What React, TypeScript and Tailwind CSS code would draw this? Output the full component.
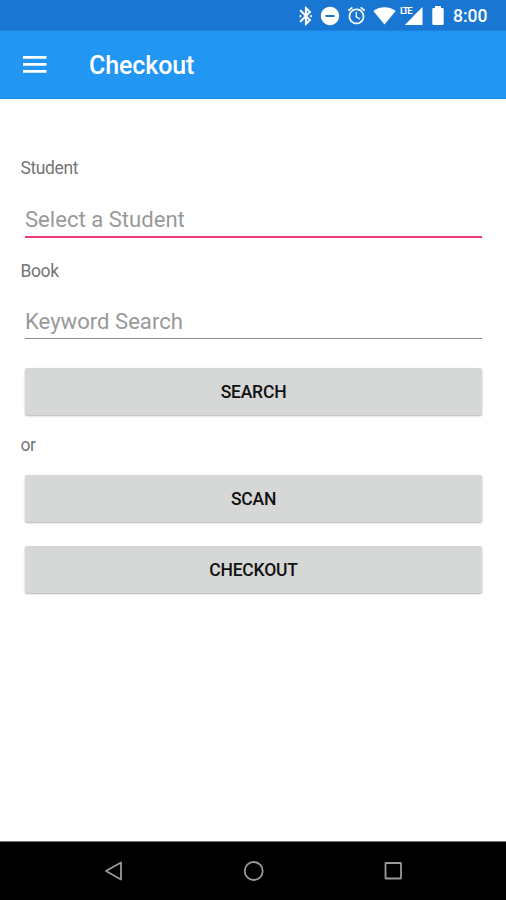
import type { ReactNode } from 'react';

function StatusBar() {
  return (
    <div className="flex h-[30px] shrink-0 items-center bg-[#1976d2] pl-[295px] pt-px text-white">
      <svg className="h-[22px] w-[22px]" viewBox="0 0 24 24" fill="currentColor">
        <path
          stroke="currentColor"
          strokeWidth={0.3}
          d="M17.71 7.71L12 2h-1v7.59L6.41 5 5 6.41 10.59 12 5 17.59 6.41 19 11 14.41V22h1l5.71-5.71-4.3-4.29 4.3-4.29zM13 5.83l1.88 1.88L13 9.59V5.83zm1.88 10.46L13 18.17v-3.76l1.88 1.88z"
        />
        <path d="M4.5 12L6 10.5 7.5 12 6 13.5zM16 12l1.5-1.5L19 12l-1.5 1.5z" />
      </svg>
      <svg className="ml-[2px] h-[22px] w-[22px]" viewBox="0 0 24 24" fill="currentColor">
        <path d="M12 2C6.48 2 2 6.48 2 12s4.48 10 10 10 10-4.48 10-10S17.52 2 12 2zm5 11H7v-2h10v2z" />
      </svg>
      <svg className="ml-[5px] h-[21px] w-[21px]" viewBox="0 0 24 24" fill="currentColor">
        <path d="M22 5.72l-4.6-3.86-1.29 1.53 4.6 3.86L22 5.72zM7.88 3.39L6.6 1.86 2 5.71l1.29 1.53 4.59-3.85zM12.5 8H11v6l4.75 2.85.75-1.23-4-2.37V8zM12 4c-4.97 0-9 4.03-9 9s4.02 9 9 9c4.97 0 9-4.03 9-9s-4.03-9-9-9zm0 16c-3.87 0-7-3.13-7-7s3.13-7 7-7 7 3.13 7 7-3.13 7-7 7z" />
      </svg>
      <svg className="ml-[6px] h-[18px] w-[23px]" viewBox="0 0 23 18" fill="currentColor">
        <path d="M11.5 17.5L.3 4C3 1.6 7 .2 11.5.2S20 1.6 22.7 4z" />
      </svg>
      <div className="relative ml-[4px] h-[18px] w-[23px]">
        <svg className="h-[18px] w-[23px]" viewBox="0 0 23 18" fill="currentColor">
          <path d="M22.5 0v18H4.8l8.4-8.6V9.3z" />
        </svg>
        <span className="absolute left-0 top-0 text-[9.5px] font-bold leading-[8px] tracking-[-1.4px]">LTE</span>
      </div>
      <svg className="ml-[9px] h-[19px] w-[12px]" viewBox="0 0 12 19" fill="currentColor">
        <path d="M3 0h6v2h1.5A1.2 1.2 0 0 1 11.7 3.2v14.5A1.2 1.2 0 0 1 10.5 19h-9A1.2 1.2 0 0 1 .3 17.7V3.2A1.2 1.2 0 0 1 1.5 2H3z" />
      </svg>
      <span className="ml-[9px] pt-[2px] text-[17.5px] font-medium leading-none">8:00</span>
    </div>
  );
}

function AppBar() {
  return (
    <header className="flex h-[69px] shrink-0 items-center border-b border-[#1f87dc] bg-[#2196f3] pl-[23px] text-white shadow-[inset_0_2px_1px_-1px_#1b80db]">
      <button aria-label="Menu">
        <svg className="h-[17px] w-[24px]" viewBox="0 0 24 17" fill="currentColor">
          <path d="M0 0h23.5v2.8H0zM0 7h23.5v2.8H0zM0 14h23.5v2.8H0z" />
        </svg>
      </button>
      <h1 className="ml-[42px] pt-[3px] text-[25px] font-medium leading-none tracking-[-0.1px]">Checkout</h1>
    </header>
  );
}

function Label({ children }: { children: ReactNode }) {
  return (
    <div className="px-[20.5px] text-[17.5px] leading-[20px] tracking-[-0.4px] text-[#757575]">{children}</div>
  );
}

function ActionButton({ children }: { children: ReactNode }) {
  return (
    <button className="ml-[25px] mr-[24px] h-[47px] rounded-[2px] bg-[#d6d7d7] pt-px text-[17.5px] font-medium tracking-[-0.2px] text-[#111] shadow-[0_1px_2px_rgba(0,0,0,0.3)]">
      {children}
    </button>
  );
}

function NavBar() {
  return (
    <nav className="flex h-[59px] shrink-0 items-center justify-between border-t border-[#777] bg-black px-[102px] text-[#999]">
      <svg className="h-[22px] w-[22px]" viewBox="0 0 22 22" fill="none" stroke="currentColor" strokeWidth={1.8}>
        <path d="M19 2.5v17L4 11z" strokeLinejoin="round" />
      </svg>
      <svg className="h-[22px] w-[22px]" viewBox="0 0 22 22" fill="none" stroke="currentColor" strokeWidth={1.8}>
        <circle cx="11.7" cy="11" r="9" />
      </svg>
      <svg className="h-[22px] w-[22px]" viewBox="0 0 22 22" fill="none" stroke="currentColor" strokeWidth={1.8}>
        <rect x="3.5" y="3" width="15.5" height="15.5" rx="0.5" />
      </svg>
    </nav>
  );
}

export default function App() {
  return (
    <div className="flex h-[900px] w-[506px] flex-col overflow-hidden bg-white font-[Roboto,sans-serif]">
      <StatusBar />
      <AppBar />

      <main className="flex flex-1 flex-col pt-[59px]">
        <Label>Student</Label>
        <input
          type="text"
          placeholder="Select a Student"
          className="ml-[25px] mr-[24px] mt-[25px] h-[35px] border-b-2 border-[#f0387c] pb-px text-[22.1px] outline-none placeholder:text-[#999]"
        />

        <div className="mt-[23px] flex flex-col">
          <Label>Book</Label>
          <input
            type="text"
            placeholder="Keyword Search"
            className="ml-[25px] mr-[24px] mt-[25px] h-[33px] border-b border-[#8a8a8a] text-[22.1px] outline-none placeholder:text-[#999]"
          />
        </div>

        <div className="mt-[29px] flex flex-col">
          <ActionButton>SEARCH</ActionButton>
        </div>
        <div className="my-[20px]">
          <Label>or</Label>
        </div>
        <div className="flex flex-col gap-[24px]">
          <ActionButton>SCAN</ActionButton>
          <ActionButton>CHECKOUT</ActionButton>
        </div>
      </main>

      <NavBar />
    </div>
  );
}
